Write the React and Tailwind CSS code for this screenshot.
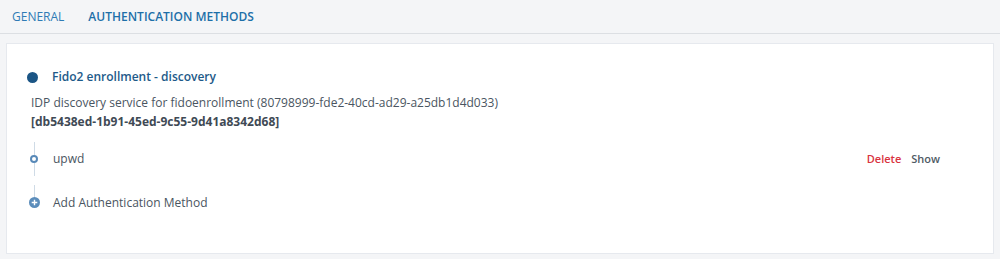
export default function App() {
  return (
    <div className="w-[1000px] h-[259px] bg-[#f4f5f7] font-['Open_Sans',sans-serif] text-[12px]">
      {/* tabs */}
      <div className="h-[34px] flex items-center gap-[24px] px-[12px] border-b border-[#dcdfe3]">
        <span className="text-[#2f7bb5]">GENERAL</span>
        <span className="text-[#1d6fa8] font-semibold">AUTHENTICATION METHODS</span>
      </div>

      <div className="mx-[6px] mt-[9px] h-[211px] bg-white border border-[#e6e9ee] pt-[24px] pl-[20px] pr-[53px]">
        <div className="flex items-center h-[18px]">
          <span className="w-[11px] h-[11px] rounded-full bg-[#1b5585]" />
          <span className="ml-[14px] text-[#1d5a89] font-semibold">Fido2 enrollment - discovery</span>
        </div>
        <div className="mt-[8px] ml-[4px] text-[#4a5561] leading-[18px]">
          IDP discovery service for fidoenrollment (80798999-fde2-40cd-ad29-a25db1d4d033)
        </div>
        <div className="ml-[4px] text-[#3f4a55] font-bold leading-[20px]">
          [db5438ed-1b91-45ed-9c55-9d41a8342d68]
        </div>

        {/* methods tree */}
        <div className="mt-[10px] flex items-center">
          <div className="w-[12px] h-[34px] flex flex-col items-center ml-[1px]">
            <div className="w-px flex-1 bg-[#cfdbe6]" />
            <div className="w-[8px] h-[8px] rounded-full border-2 border-[#5889b8] bg-white" />
            <div className="w-px flex-1 bg-[#cfdbe6]" />
          </div>
          <span className="ml-[13px] text-[#4a5561]">upwd</span>
          <span className="ml-auto text-[#d9333f] font-semibold text-[11px]">Delete</span>
          <span className="ml-[10px] text-[#4f5a65] font-semibold text-[11px]">Show</span>
        </div>

        <div className="mt-[9px] flex items-start">
          <div className="w-[12px] flex flex-col items-center ml-[1px]">
            <div className="w-px h-[12px] bg-[#cfdbe6]" />
            <svg width="11" height="11" viewBox="0 0 11 11">
              <circle cx="5.5" cy="5.5" r="5.5" fill="#5b8dbb" />
              <path d="M5.5 2.7v5.6M2.7 5.5h5.6" stroke="#fff" strokeWidth="1.4" />
            </svg>
          </div>
          <span className="ml-[13px] mt-[9px] text-[#4a5561]">Add Authentication Method</span>
        </div>
      </div>
    </div>
  );
}
